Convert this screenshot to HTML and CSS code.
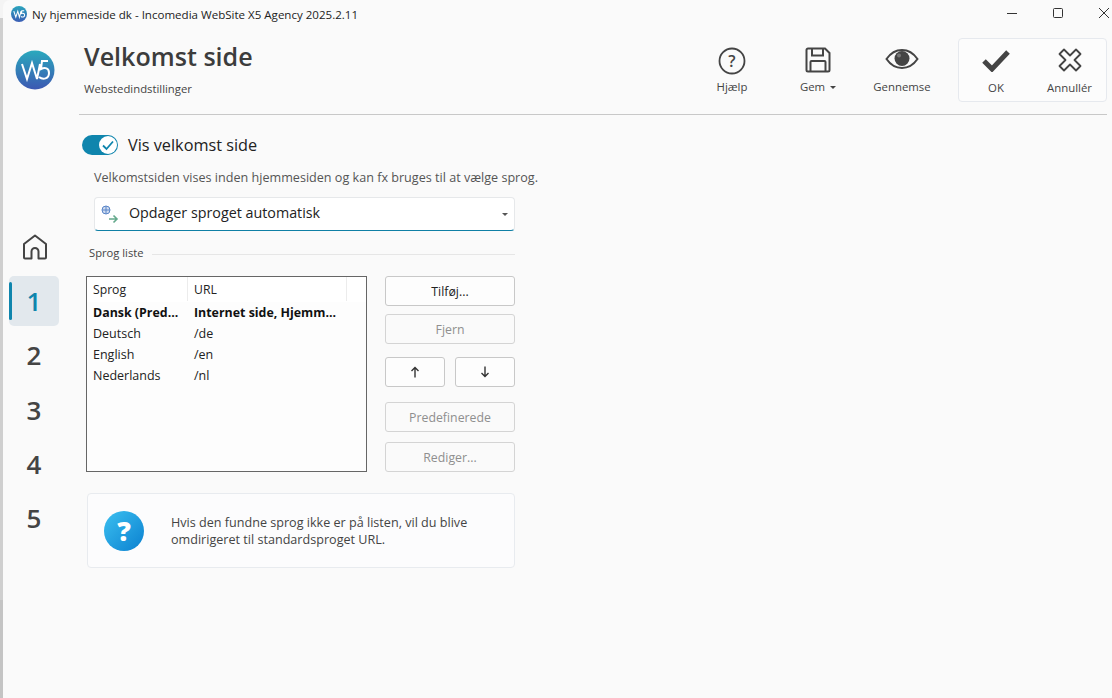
FILE: index.html
```html
<!DOCTYPE html>
<html lang="da">
<head>
<meta charset="utf-8">
<title>Ny hjemmeside dk</title>
<link rel="stylesheet" href="styles.css">
</head>
<body>
<div class="window">
  <div class="titlebar">
    <svg class="app-icon" width="16" height="16" viewBox="0 0 40 40"><defs><linearGradient id="g1" x1="0" y1="0" x2="0" y2="1"><stop offset="0" stop-color="#2aa5bd"/><stop offset="1" stop-color="#3b5db5"/></linearGradient></defs><circle cx="20" cy="20" r="20" fill="url(#g1)"/><path d="M7 13l5 15 5-15 4 15 4-15M33 12h-6l-1 7c5-2 8 0 8 4 0 5-6 6-9 3" fill="none" stroke="#fff" stroke-width="2.6"/></svg>
    <span class="title-text">Ny hjemmeside dk - Incomedia WebSite X5 Agency 2025.2.11</span>
    <div class="win-controls">
      <svg width="12" height="12" viewBox="0 0 12 12"><path d="M1 6.500h10" stroke="#333" fill="none"/></svg>
      <svg width="12" height="12" viewBox="0 0 12 12"><rect x="1.500" y="1.500" width="9" height="9" rx="1" stroke="#333" fill="none"/></svg>
      <svg width="12" height="12" viewBox="0 0 12 12"><path d="M1 1l10 10M11 1L1 11" stroke="#333" fill="none"/></svg>
    </div>
  </div>
  <div class="app">
    <nav class="sidebar">
      <svg class="logo" width="40" height="40" viewBox="0 0 40 40"><defs><linearGradient id="g2" x1="0" y1="0" x2="0" y2="1"><stop offset="0" stop-color="#2aa9bd"/><stop offset="1" stop-color="#3c58b2"/></linearGradient></defs><circle cx="20" cy="20" r="19.500" fill="url(#g2)"/><path d="M7 14l5 15 5-16 5 16 3-15M33 11h-6l-1 8c4-2 8-1 8 4 0 6-6 7-10 4" fill="none" stroke="#fff" stroke-width="2"/></svg>
      <svg class="home" width="24" height="26" viewBox="0 0 24 26"><path d="M2 24.500h6.500v-7a3.500 3.500 0 0 1 7 0v7H22a1 1 0 0 0 1-1V10L12 1.500 1 10v13.500a1 1 0 0 0 1 1z" fill="none" stroke="#444" stroke-width="2" stroke-linejoin="round"/></svg>
      <div class="step active">1</div>
      <div class="step">2</div>
      <div class="step">3</div>
      <div class="step">4</div>
      <div class="step">5</div>
    </nav>
    <main class="main">
      <header class="head">
        <div class="head-text">
          <h1>Velkomst side</h1>
          <p>Webstedindstillinger</p>
        </div>
        <div class="tools">
          <div class="tool t-help">
            <svg width="28" height="28" viewBox="0 0 28 28"><circle cx="14" cy="14" r="12.500" fill="none" stroke="#444" stroke-width="1.800"/><text x="14" y="20" text-anchor="middle" class="q">?</text></svg>
            <span>Hjælp</span>
          </div>
          <div class="tool t-save">
            <svg width="26" height="26" viewBox="0 0 26 26"><path d="M3 1.500h17l4.500 4.500v17a1.500 1.500 0 0 1-1.500 1.500H3A1.500 1.500 0 0 1 1.500 23V3A1.500 1.500 0 0 1 3 1.500z" fill="none" stroke="#444" stroke-width="2"/><path d="M7 2v6.500h11V2M5.500 24v-9a1 1 0 0 1 1-1h13a1 1 0 0 1 1 1v9" fill="none" stroke="#444" stroke-width="2"/></svg>
            <span>Gem <i class="caret"></i></span>
          </div>
          <div class="tool t-view">
            <svg width="34" height="24" viewBox="0 0 34 24"><path d="M1.500 12C6 5.500 11 3 17 3s11 2.500 15.500 9C28 18.500 23 21 17 21S6 18.500 1.500 12z" fill="none" stroke="#444" stroke-width="2"/><circle cx="17" cy="11.500" r="7.500" fill="#444"/><circle cx="14" cy="8.500" r="2" fill="#777"/></svg>
            <span>Gennemse</span>
          </div>
          <div class="confirm">
            <div class="tool t-ok">
              <svg width="28" height="24" viewBox="0 0 28 24"><path d="M2 13l8 8L26 4" fill="none" stroke="#444" stroke-width="5"/></svg>
              <span>OK</span>
            </div>
            <div class="tool t-cancel">
              <svg width="24" height="24" viewBox="0 0 24 24"><path d="M6 1.500L12 7.500l6-6 4.500 4.500-6 6 6 6-4.500 4.500-6-6-6 6L1.500 18l6-6-6-6z" fill="none" stroke="#444" stroke-width="1.800" stroke-linejoin="round"/></svg>
              <span>Annullér</span>
            </div>
          </div>
        </div>
      </header>
      <section class="content">
        <div class="toggle-row">
          <div class="toggle"><div class="knob"><svg width="14" height="14" viewBox="0 0 14 14"><path d="M2 7.500l3.500 3.500L12 3.500" fill="none" stroke="#0f85ad" stroke-width="1.800"/></svg></div></div>
          <span class="toggle-label">Vis velkomst side</span>
        </div>
        <p class="desc">Velkomstsiden vises inden hjemmesiden og kan fx bruges til at vælge sprog.</p>
        <div class="select">
          <svg width="18" height="20" viewBox="0 0 18 20"><circle cx="5" cy="6" r="4" fill="#cfdcf0" stroke="#5b86c8"/><path d="M1 6h8M5 2v8" stroke="#5b86c8" fill="none"/><path d="M8 15h8M12.500 11.500L16 15l-3.500 3.500" stroke="#64a98c" stroke-width="1.600" fill="none"/></svg>
          <span class="select-text">Opdager sproget automatisk</span>
          <i class="select-caret"></i>
        </div>
        <div class="legend"><span>Sprog liste</span><div class="legend-line"></div></div>
        <div class="list-area">
          <div class="table">
            <div class="row header"><span class="c1">Sprog</span><span class="c2">URL</span><span class="c3"></span></div>
            <div class="row bold"><span class="c1">Dansk (Pred...</span><span class="c2">Internet side, Hjemm...</span></div>
            <div class="row"><span class="c1">Deutsch</span><span class="c2">/de</span></div>
            <div class="row"><span class="c1">English</span><span class="c2">/en</span></div>
            <div class="row"><span class="c1">Nederlands</span><span class="c2">/nl</span></div>
          </div>
          <div class="buttons">
            <div class="btn enabled">Tilføj...</div>
            <div class="btn">Fjern</div>
            <div class="btn-pair">
              <div class="btn enabled"><svg width="10" height="12" viewBox="0 0 10 12"><path d="M5 11.500V1.500M1.500 5L5 1.500 8.500 5" fill="none" stroke="#333" stroke-width="1.400"/></svg></div>
              <div class="btn enabled"><svg width="10" height="12" viewBox="0 0 10 12"><path d="M5 .5v10M1.500 7L5 10.500 8.500 7" fill="none" stroke="#333" stroke-width="1.400"/></svg></div>
            </div>
            <div class="btn gap-big">Predefinerede</div>
            <div class="btn gap-mid">Rediger...</div>
          </div>
        </div>
        <div class="info">
          <svg width="40" height="40" viewBox="0 0 40 40"><defs><linearGradient id="g3" x1="0" y1="0" x2="1" y2="1"><stop offset="0" stop-color="#3cc0f0"/><stop offset="1" stop-color="#0a80d0"/></linearGradient></defs><circle cx="20" cy="20" r="20" fill="url(#g3)"/><text x="20" y="30" text-anchor="middle" class="info-q">?</text></svg>
          <p>Hvis den fundne sprog ikke er på listen, vil du blive<br>omdirigeret til standardsproget URL.</p>
        </div>
      </section>
    </main>
  </div>
</div>
</body>
</html>
```
FILE: styles.css
```css
* { box-sizing: border-box; }
html, body { margin: 0; padding: 0; height: 100%; overflow: hidden; }
body {
  background: linear-gradient(#f4f4f4 0 18px, #cfcfcf 18px 600px, #c4c4c4 600px);
  font-family: "Open Sans", "Noto Sans", sans-serif;
  font-size: 11.5px;
  color: #333;
}
.window {
  margin-left: 3px;
  height: 698px;
  background: #fafafa;
  border-top-left-radius: 7px;
  display: flex;
  flex-direction: column;
}
.titlebar {
  height: 28px;
  display: flex;
  align-items: center;
  padding-left: 8px;
  flex: none;
}
.title-text { margin-left: 5px; font-size: 11.55px; color: #222; }
.win-controls {
  margin-left: auto;
  display: flex;
  gap: 34px;
  width: 126px;
  padding-left: 16px;
  margin-right: -4px;
  position: relative;
  top: -1px;
}
.app { display: flex; flex: 1; min-height: 0; }
.sidebar {
  width: 76px;
  flex: none;
  display: flex;
  flex-direction: column;
  align-items: flex-start;
  padding-top: 22px;
}
.logo { margin-left: 12px; }
.home { margin-left: 20px; margin-top: 144px; margin-bottom: 16px; }
.step {
  width: 50px;
  height: 50px;
  margin-left: 6px;
  margin-bottom: 4.300px;
  display: flex;
  align-items: center;
  justify-content: center;
  font-size: 26px;
  font-weight: 600;
  color: #444;
  border-radius: 5px;
  position: relative;
}
.step.active { background: #e2e8ed; color: #0f85ad; }
.step.active::before {
  content: "";
  position: absolute;
  left: 0;
  top: 6px;
  bottom: 6px;
  width: 3px;
  border-radius: 2px;
  background: #0f85ad;
}
.main { flex: 1; min-width: 0; padding-right: 5px; }
.head {
  height: 88px;
  margin-top: -1px;
  border-bottom: 1px solid #c8c8c8;
  display: flex;
  justify-content: space-between;
}
.head-text { padding-left: 5px; }
h1 { margin: 11px 0 0; font-size: 25.1px; font-weight: 600; color: #3c3c3c; line-height: 36px; }
.head-text p { margin: 7px 0 0; font-size: 11.3px; color: #444; line-height: 16px; }
.tools { display: flex; padding-top: 11px; height: 76px; }
.tool {
  display: flex;
  flex-direction: column;
  align-items: center;
  justify-content: space-between;
  font-size: 11.4px;
  color: #444;
  padding: 9px 0 7px;
  height: 64px;
}
.tool span { line-height: 16px; white-space: nowrap; }
.t-help { width: 72px; }
.t-save { width: 100px; }
.t-view { width: 68px; margin-right: 22px; }
.t-ok { width: 74px; }
.t-cancel { width: 73px; }
.caret {
  display: inline-block;
  margin-left: 2px;
  vertical-align: middle;
  border: 3px solid transparent;
  border-top-color: #444;
  border-bottom-width: 0;
}
.confirm {
  display: flex;
  width: 149px;
  height: 64px;
  border: 1px solid #e6e9ee;
  border-radius: 4px;
  background: #fcfcfc;
}
.content { padding: 20px 0 0 3px; }
.toggle-row { display: flex; align-items: center; height: 20px; }
.toggle {
  width: 36px;
  height: 20px;
  background: #0f85ad;
  border-radius: 10px;
  position: relative;
}
.knob {
  position: absolute;
  right: 1px;
  top: 1px;
  width: 18px;
  height: 18px;
  border-radius: 50%;
  background: #fff;
  display: flex;
  align-items: center;
  justify-content: center;
}
.toggle-label { margin-left: 10px; font-size: 16.25px; color: #222; }
.desc { margin: 15px 0 0 12px; font-size: 12.6px; line-height: 16px; color: #555; white-space: nowrap; }
.select {
  margin: 11px 0 0 12px;
  width: 421px;
  height: 34px;
  background: #fff;
  border: 1px solid #e6e8ea;
  border-bottom: 1px solid #0f7fa5;
  border-radius: 4px;
  display: flex;
  align-items: center;
  padding: 0 6px 0 6px;
}
.select svg { margin-top: -1px; }
.select-text { margin-left: 10px; font-size: 14.3px; color: #222; line-height: 18px; padding-bottom: 2px; }
.select-caret {
  margin-left: auto;
  border: 3.500px solid transparent;
  border-top-color: #555;
  border-bottom-width: 0;
}
.legend { display: flex; align-items: center; margin: 15px 0 0 7px; width: 426px; height: 16px; }
.legend span { font-size: 11.2px; color: #444; line-height: 14px; padding-bottom: 2px; }
.legend-line { flex: 1; height: 1px; background: #e6e6e6; margin-left: 8px; }
.list-area { display: flex; margin: 14px 0 0 4px; }
.table {
  width: 281px;
  height: 196px;
  background: #fdfdfd;
  border: 1px solid #666;
  overflow: hidden;
}
.row { display: flex; height: 21px; align-items: center; font-size: 12.5px; color: #222; white-space: nowrap; }
.row.header { height: 25px; background: #fff; padding-bottom: 1px; font-size: 12.2px; }
.row.bold { font-weight: 700; color: #111; font-size: 12.4px; }
.c1 { width: 101px; padding-left: 6px; height: 100%; display: flex; align-items: center; }
.c2 { width: 159px; padding-left: 6px; height: 100%; display: flex; align-items: center; }
.c3 { flex: 1; }
.header .c1, .header .c2 { border-right: 1px solid #ececec; }
.buttons { width: 130px; margin-left: 18px; display: flex; flex-direction: column; }
.btn {
  height: 30px;
  background: #fafafa;
  border: 1px solid #d4d4d4;
  border-radius: 3px;
  display: flex;
  align-items: center;
  justify-content: center;
  font-size: 12.3px;
  color: #8f8f8f;
}
.btn + .btn { margin-top: 8px; }
.btn.enabled { color: #222; border-color: #c8c8c8; background: #fdfdfd; }
.btn-pair { display: flex; justify-content: space-between; margin-top: 13px; }
.btn-pair .btn { width: 60px; margin-top: 0; }
.btn.gap-big { margin-top: 15px; }
.btn.gap-mid { margin-top: 10px; }
.info {
  margin: 21px 0 0 5px;
  width: 428px;
  height: 75px;
  background: #fcfcfd;
  border: 1px solid #e8ebef;
  border-radius: 4px;
  display: flex;
  align-items: center;
  padding-left: 16px;
}
.info p { margin: 0 0 0 27px; font-size: 12.6px; line-height: 17px; color: #444; white-space: nowrap; }
.q { font: 600 16px "Open Sans", sans-serif; fill: #444; }
.info-q { font: 800 27px "Open Sans", sans-serif; fill: #fff; }
```
